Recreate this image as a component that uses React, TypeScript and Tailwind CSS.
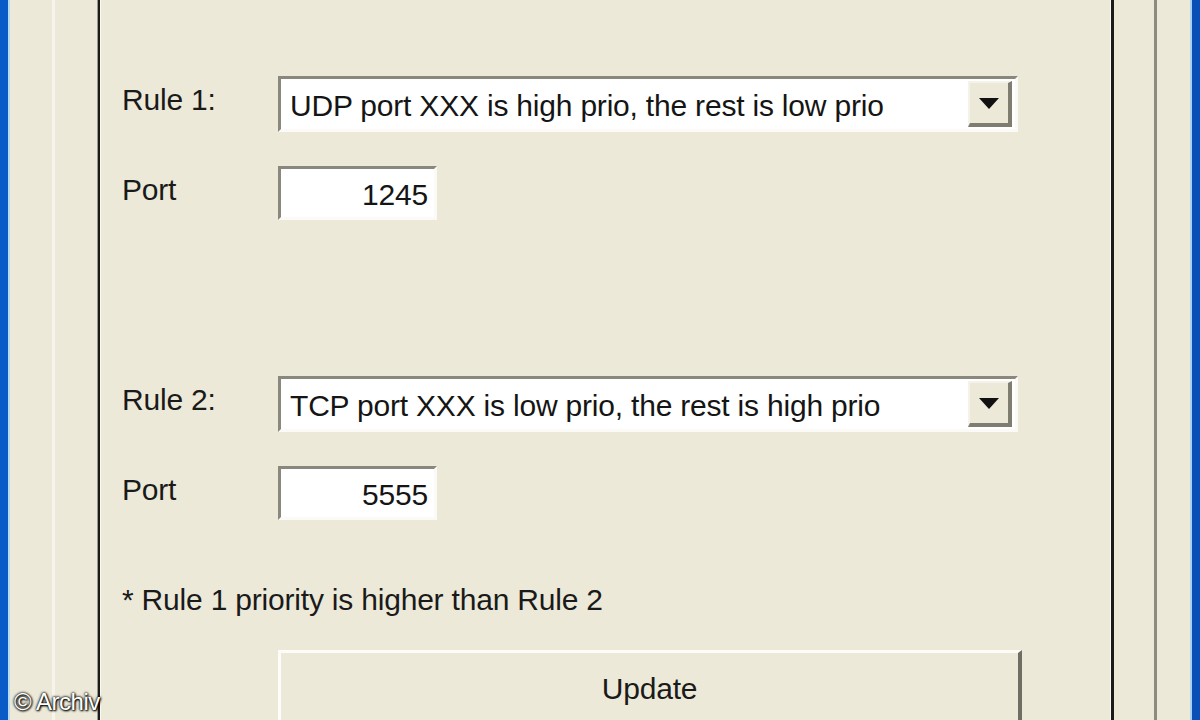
import React from "react";

const font = { fontFamily: '"Liberation Sans", Arial, sans-serif' };

function Combo({ text }: { text: string }) {
  return (
    <div className="w-[740px] h-[56px] border-t-[3px] border-l-[3px] border-b-[3px] border-r-[3px] border-t-[#8a877c] border-l-[#8a877c] border-b-[#fbfaf6] border-r-[#fbfaf6] bg-white flex items-center">
      <div className="flex-1 pl-[9px] pt-[2px] text-[30px] text-[#151515] tracking-[-0.2px] whitespace-nowrap">{text}</div>
      <div className="w-[44px] h-[46px] mr-[3px] bg-[#ece9d8] border-t-[2px] border-l-[2px] border-b-[4px] border-r-[4px] border-t-[#f4f2ea] border-l-[#f4f2ea] border-b-[#7f7c70] border-r-[#7f7c70] flex items-center justify-center">
        <svg width="22" height="13" viewBox="0 0 22 13">
          <polygon points="1,1 21,1 11,12" fill="#111" />
        </svg>
      </div>
    </div>
  );
}

function PortBox({ value }: { value: string }) {
  return (
    <div className="w-[159px] h-[54px] border-t-[3px] border-l-[3px] border-b-[3px] border-r-[3px] border-t-[#8a877c] border-l-[#8a877c] border-b-[#fbfaf6] border-r-[#fbfaf6] bg-white flex items-center justify-end pr-[6px] pt-[2px] text-[30px] tracking-[-0.2px] text-[#151515]">
      {value}
    </div>
  );
}

export default function App() {
  return (
    <div className="w-[1200px] h-[720px] bg-[#ece9d8] flex overflow-hidden relative" style={font}>
      <div className="w-[8px] bg-[#0a5ac8]" />
      <div className="w-[2px] bg-[#b8dcf5]" />
      <div className="w-[42px]" />
      <div className="w-[3px] bg-[#f7f4ec]" />
      <div className="w-[42px]" />
      <div className="w-[1px] bg-[#9c9a90]" />
      <div className="w-[2px] bg-[#1b1b18]" />
      <div className="w-[1px] bg-[#faf8f2]" />
      <div className="flex-1 flex flex-col pl-[21px] text-[#1a1a1a]">
        <div className="flex mt-[76px] h-[56px]">
          <div className="w-[156px] text-[30px] pt-[1px] tracking-[-0.2px]">Rule 1:</div>
          <Combo text="UDP port XXX is high prio, the rest is low prio" />
        </div>
        <div className="flex mt-[34px] h-[54px]">
          <div className="w-[156px] text-[30px] pt-[1px] tracking-[-0.2px]">Port</div>
          <PortBox value="1245" />
        </div>
        <div className="flex mt-[156px] h-[56px]">
          <div className="w-[156px] text-[30px] pt-[1px] tracking-[-0.2px]">Rule 2:</div>
          <Combo text="TCP port XXX is low prio, the rest is high prio" />
        </div>
        <div className="flex mt-[34px] h-[54px]">
          <div className="w-[156px] text-[30px] pt-[1px] tracking-[-0.2px]">Port</div>
          <PortBox value="5555" />
        </div>
        <div className="mt-[62px] text-[30px] tracking-[-0.2px] leading-[36px]">* Rule 1 priority is higher than Rule 2</div>
        <div className="flex mt-[32px]">
          <div className="w-[156px]" />
          <div className="w-[744px] h-[80px] bg-[#ece9d8] border-t-[3px] border-l-[3px] border-r-[4px] border-t-[#fdfcf8] border-l-[#fdfcf8] border-r-[#706d62] flex justify-center pt-[13px] text-[30px] tracking-[-0.2px]">
            Update
          </div>
        </div>
      </div>
      <div className="w-[1px] bg-[#faf8f2]" />
      <div className="w-[3px] bg-[#1b1b18]" />
      <div className="w-[40px]" />
      <div className="w-[3px] bg-[#8d8a7e]" />
      <div className="w-[33px]" />
      <div className="w-[2px] bg-[#a9d0f2]" />
      <div className="w-[8px] bg-[#0a4fb8]" />
      <div className="absolute left-[14px] top-[684px] text-[24px] text-white tracking-[-0.5px] [text-shadow:0_0_3px_#000,0_0_2px_#000,1px_1px_2px_#000]">
        © Archiv
      </div>
    </div>
  );
}
